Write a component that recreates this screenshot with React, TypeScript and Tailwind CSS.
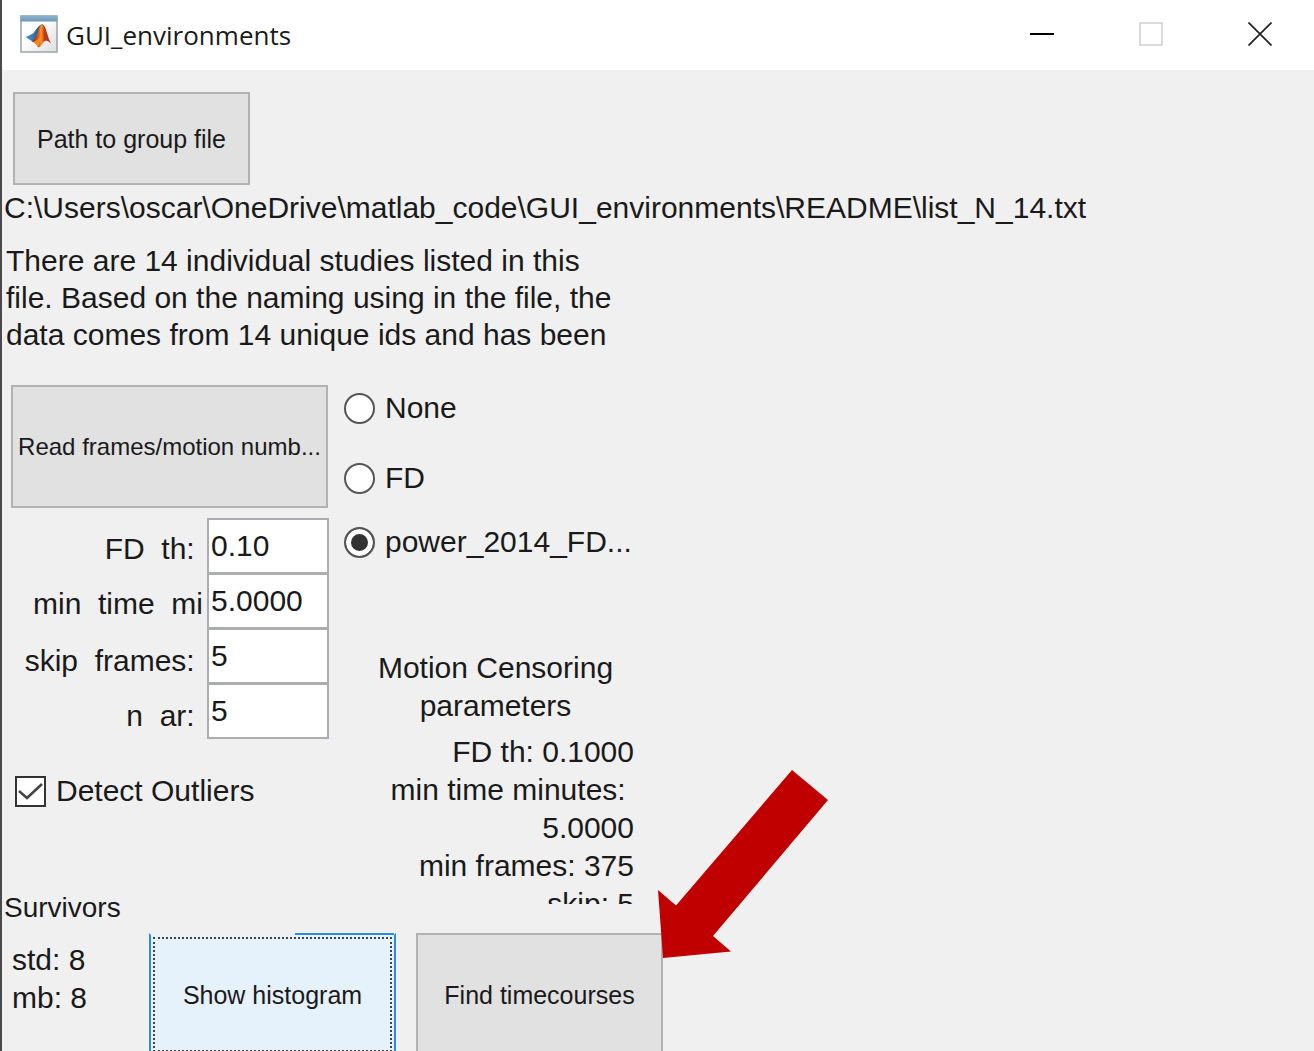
import React, { useState } from 'react';
import { clsx } from 'clsx';

const METHODS = [
  { id: 'none', label: 'None', row: 'h-[70px]' },
  { id: 'fd', label: 'FD', row: 'h-[64px]' },
  { id: 'power', label: 'power_2014_FD...', row: 'h-[64px]' },
];

const FIELDS = [
  { id: 'fd-th', label: 'FD  th: ', value: '0.10', pad: 'pt-1' },
  { id: 'min-time', label: 'min  time  mi', value: '5.0000', pad: 'pt-1' },
  { id: 'skip-frames', label: 'skip  frames: ', value: '5', pad: 'pt-1.5' },
  { id: 'n-ar', label: 'n  ar: ', value: '5', pad: 'pt-1.5' },
];

const MatlabIcon = () => (
  <svg viewBox="0 0 38 38" className="size-[38px]" aria-hidden="true">
    <defs>
      <linearGradient id="frame" x1="0" y1="0" x2="1" y2="1">
        <stop offset="0.4" stopColor="#ffffff" />
        <stop offset="1" stopColor="#dcdde0" />
      </linearGradient>
      <linearGradient id="bar" x1="0" y1="0" x2="0" y2="1">
        <stop offset="0" stopColor="#8fb6cf" />
        <stop offset="1" stopColor="#6c97b8" />
      </linearGradient>
      <linearGradient id="blade" x1="0" y1="0" x2="1" y2="0">
        <stop offset="0" stopColor="#4f9ccb" />
        <stop offset="1" stopColor="#274b7c" />
      </linearGradient>
      <linearGradient id="peak" x1="0" y1="0" x2="1" y2="0">
        <stop offset="0" stopColor="#7a1d1d" />
        <stop offset="0.35" stopColor="#e3531c" />
        <stop offset="0.5" stopColor="#f39a2c" />
        <stop offset="0.65" stopColor="#c93a18" />
        <stop offset="1" stopColor="#a52a16" />
      </linearGradient>
    </defs>
    <rect x="1" y="1" width="36" height="36" fill="url(#frame)" stroke="#a3a8ad" strokeWidth="1.6" />
    <rect x="0.5" y="0.5" width="37" height="6" fill="url(#bar)" />
    <path d="M5.500 22 L11 19.500 Q14 18.500 16 14.500 Q19 10 22 9 L19 24 L12.500 26.500 Z" fill="url(#blade)" />
    <path d="M11.500 26.500 Q15 25 17.500 18.500 Q19.500 9.500 22.500 9 Q25 10 27 18 Q28.500 24 31 28.500 Q28 25.500 26 25.500 Q23.500 26 22 29.500 Q20 33 18 32 Q16 27 11.500 26.500 Z" fill="url(#peak)" />
    <path d="M13 27 Q17 26 20 21 Q21 28 17.500 32 Q16 28 13 27 Z" fill="#f28a24" />
  </svg>
);

const TitleBar = () => (
  <header className="flex h-[70px] shrink-0 items-center bg-white pb-[3px] pl-[18px]">
    <MatlabIcon />
    <h1 className="grow pt-0.5 pl-2 font-['Open_Sans',sans-serif] text-[26px] leading-9">GUI_environments</h1>
    <button type="button" aria-label="Minimize" className="flex h-full w-[109px] items-center justify-center">
      <svg viewBox="0 0 24 24" className="size-6"><path d="M0 12 H24" stroke="#000" strokeWidth="2" /></svg>
    </button>
    <button type="button" aria-label="Maximize" disabled className="flex h-full w-[109px] items-center justify-center">
      <svg viewBox="0 0 24 24" className="size-6"><rect x="1" y="1" width="22" height="22" fill="none" stroke="#cfcfcf" strokeWidth="1.5" /></svg>
    </button>
    <button type="button" aria-label="Close" className="flex h-full w-[109px] items-center justify-center">
      <svg viewBox="0 0 24 24" className="size-6"><path d="M0.500 0.500 L23.500 23.500 M23.500 0.500 L0.500 23.500" stroke="#222" strokeWidth="1.7" /></svg>
    </button>
  </header>
);

interface PushButtonProps {
  className?: string;
  children: React.ReactNode;
}

const PushButton: React.FC<PushButtonProps> = ({ className, children }) => (
  <button
    type="button"
    className={clsx('shrink-0 border-2 border-[#b2b2b2] bg-[#e1e1e1] whitespace-nowrap', className)}
  >
    {children}
  </button>
);

const App: React.FC = () => {
  const [method, setMethod] = useState('power');
  const [outliers, setOutliers] = useState(true);

  return (
    <div className="relative flex h-screen flex-col overflow-hidden border-l-2 border-[#4a4a4c] bg-[#f0f0f0] font-['Liberation_Sans',Arial,sans-serif] text-[30px] leading-[38px] text-[#1a1a1a]">
      <TitleBar />

      <main className="flex flex-col pt-[22px]">
        <PushButton className="ml-[11px] h-[93px] w-[237px] self-start text-[25px]">Path to group file</PushButton>
        <p className="pt-1 pl-0.5 whitespace-nowrap">
          C:\Users\oscar\OneDrive\matlab_code\GUI_environments\README\list_N_14.txt
        </p>
        <p className="pt-[15px] pl-1 leading-[37px]">
          There are 14 individual studies listed in this<br />
          file. Based on the naming using in the file, the<br />
          data comes from 14 unique ids and has been
        </p>

        <div className="flex pt-8">
          <section className="flex w-[327px] shrink-0 flex-col">
            <PushButton className="ml-[9px] h-[123px] w-[317px] text-2xl">Read frames/motion numb...</PushButton>

            <div className="flex flex-col pt-2.5">
              {FIELDS.map((f) => (
                <div key={f.id} className="flex h-[55px]">
                  <label htmlFor={f.id} className={clsx('grow overflow-hidden pr-1 text-right leading-[54px] whitespace-pre', f.pad)}>
                    {f.label}
                  </label>
                  <input
                    id={f.id}
                    type="text"
                    defaultValue={f.value}
                    className="h-14 w-[122px] shrink-0 border-2 border-[#abadb3] bg-white pl-0.5 outline-none"
                  />
                </div>
              ))}
            </div>

            <label className="flex items-center gap-2.5 pt-[34px] pl-[13px]">
              <span className="grid size-[31px]">
                <input
                  type="checkbox"
                  checked={outliers}
                  onChange={(e) => setOutliers(e.target.checked)}
                  className="col-start-1 row-start-1 appearance-none border-2 border-[#333] bg-white"
                />
                {outliers && (
                  <svg viewBox="0 0 31 31" className="pointer-events-none col-start-1 row-start-1">
                    <path d="M4 15 L12 22 L27 8" fill="none" stroke="#444" strokeWidth="2.5" />
                  </svg>
                )}
              </span>
              Detect Outliers
            </label>

            <h2 className="pt-[79px] pl-0.5 text-[28px]">Survivors</h2>
          </section>

          <section className="flex w-[305px] shrink-0 flex-col">
            <div role="radiogroup" aria-label="Motion method" className="flex flex-col pl-[15px]">
              {METHODS.map((m) => (
                <label key={m.id} className={clsx('flex items-start gap-2.5 whitespace-nowrap', m.row)}>
                  <input
                    type="radio"
                    name="method"
                    checked={method === m.id}
                    onChange={() => setMethod(m.id)}
                    className="mt-2 size-[31px] shrink-0 appearance-none rounded-full border-2 border-[#555] bg-white checked:bg-[#333] checked:shadow-[inset_0_0_0_5px_white]"
                  />
                  <span className="pt-1">{m.label}</span>
                </label>
              ))}
            </div>
            <h2 className="pt-[66px] pl-7 text-center">Motion Censoring<br />parameters</h2>
            <p className="mt-2 h-[171px] overflow-hidden text-right whitespace-pre">
              {'FD th: 0.1000\nmin time minutes: \n5.0000\nmin frames: 375\nskip: 5'}
            </p>
          </section>
        </div>

        <div className="flex pt-1.5">
          <p className="w-[147px] shrink-0 pt-2 pl-2.5">std: 8<br />mb: 8</p>
          <button
            type="button"
            className="relative h-[123px] w-[247px] shrink-0 border-2 border-t-transparent border-[#2a8dde] bg-[#e5f1fb] bg-clip-padding text-[25px]"
          >
            <span className="absolute -top-0.5 right-0 h-0.5 w-[99px] bg-[#2a8dde]" />
            <span className="absolute inset-0.5 border-2 border-dotted border-[#444]" />
            Show histogram
          </button>
          <PushButton className="ml-5 h-[123px] w-[247px] text-[25px]">Find timecourses</PushButton>
        </div>
      </main>

      {/* Callout arrow pointing at "Find timecourses" */}
      <svg viewBox="0 0 170 188" className="pointer-events-none absolute top-[770px] left-[656px] h-[188px] w-[170px]">
        <path d="M134 0 L170 30 L55 166 L73 181.500 L5 188 L0 120 L18 135.500 Z" fill="#c00000" />
      </svg>
    </div>
  );
};

export default App;
